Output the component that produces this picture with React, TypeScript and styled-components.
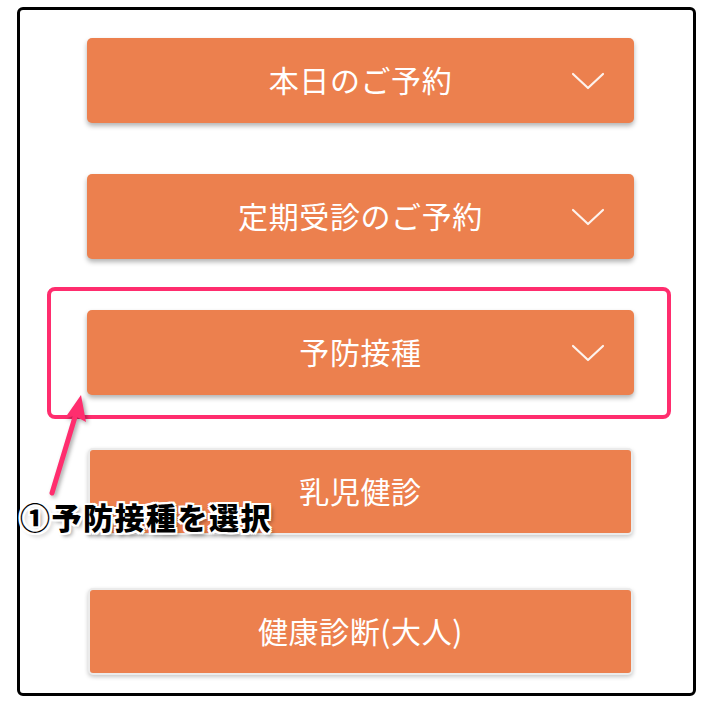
import React from "react";
import styled, { createGlobalStyle, css } from "styled-components";

const GlobalStyle = createGlobalStyle`
  html, body {
    margin: 0;
    padding: 0;
    background: #fff;
  }
  body {
    font-family: "Noto Sans CJK JP", "Noto Sans", sans-serif;
  }
`;

interface MenuItem {
  label: string;
  accordion: boolean;
  highlighted?: boolean;
}

const items: MenuItem[] = [
  { label: "本日のご予約", accordion: true },
  { label: "定期受診のご予約", accordion: true },
  { label: "予防接種", accordion: true, highlighted: true },
  { label: "乳児健診", accordion: false },
  { label: "健康診断(大人)", accordion: false },
];

const Chevron = () => (
  <svg width="34" height="20" viewBox="0 0 34 20">
    <polyline
      points="2,3 17,17 32,3"
      fill="none"
      stroke="#fff"
      strokeWidth="2.2"
      strokeLinecap="round"
      strokeLinejoin="round"
      opacity="0.9"
    />
  </svg>
);

const App = () => {
  return (
    <>
      <GlobalStyle />
      <Frame>
        <MenuList>
          {items.map((item) => (
            <Slot key={item.label} $plain={!item.accordion}>
              <MenuButton $plain={!item.accordion}>
                <span />
                <span className="label">{item.label}</span>
                <span className="icon">{item.accordion && <Chevron />}</span>
              </MenuButton>
              {item.highlighted && <Highlight />}
            </Slot>
          ))}
        </MenuList>
        <Pointer width="70" height="120" viewBox="0 0 70 120">
          <line x1="12" y1="108" x2="35" y2="32" stroke="#ff2d6e" strokeWidth="5" strokeLinecap="round" />
          <polygon points="41,10 46,37 35,31 25,33" fill="#ff2d6e" />
        </Pointer>
        <Caption>①予防接種を選択</Caption>
      </Frame>
    </>
  );
};

export default App;

const Frame = styled.div`
  position: relative;
  box-sizing: border-box;
  width: 679px;
  height: 689px;
  margin: 7px 0 0 17px;
  border: 3px solid #000;
  border-radius: 6px;
  padding: 28px 59px 20px 67px;
`;

const MenuList = styled.div`
  display: flex;
  flex-direction: column;
  align-items: center;
  gap: 51px;
`;

const Slot = styled.div<{ $plain: boolean }>`
  position: relative;
  width: 100%;
  display: flex;
  justify-content: center;
  ${({ $plain }) =>
    $plain &&
    css`
      margin-top: 2px;
    `}
`;

const MenuButton = styled.div<{ $plain: boolean }>`
  box-sizing: border-box;
  width: 547px;
  height: 85px;
  display: grid;
  grid-template-columns: 1fr auto 1fr;
  align-items: center;
  background: #ec804e;
  border-radius: 5px;
  box-shadow: 0 3px 5px rgba(0, 0, 0, 0.3);
  color: #fff;
  font-family: "Noto Sans CJK JP", "Noto Sans", sans-serif;
  font-size: 30px;
  letter-spacing: 0.6px;

  .label {
    white-space: nowrap;
    line-height: 1;
    margin-top: -3px;
  }
  .icon {
    justify-self: end;
    display: flex;
    margin-right: 29px;
  }

  ${({ $plain }) =>
    $plain &&
    css`
      width: 545px;
      height: 87px;
      border: 2px solid #ebebeb;
      box-shadow: 0 2px 4px rgba(0, 0, 0, 0.22);
    `}
`;

const Highlight = styled.div`
  position: absolute;
  top: -23px;
  bottom: -24px;
  left: -40px;
  right: -37px;
  border: 4px solid #ff2d6e;
  border-radius: 8px;
  pointer-events: none;
`;

const Pointer = styled.svg`
  position: absolute;
  left: 20px;
  top: 375px;
  overflow: visible;
  filter: drop-shadow(2px 2px 2px rgba(0, 0, 0, 0.35));
`;

const Caption = styled.div`
  position: absolute;
  left: 0;
  top: 485px;
  font-family: "Noto Sans CJK JP", "Noto Sans", sans-serif;
  font-weight: 900;
  font-size: 30px;
  letter-spacing: 1.5px;
  line-height: 1.4;
  color: #000;
  white-space: nowrap;
  text-shadow:
    -2px -2px 0 #fff, 2px -2px 0 #fff, -2px 2px 0 #fff, 2px 2px 0 #fff,
    0 -2px 0 #fff, 0 2px 0 #fff, -2px 0 0 #fff, 2px 0 0 #fff,
    3px 3px 4px rgba(0, 0, 0, 0.45);
`;
